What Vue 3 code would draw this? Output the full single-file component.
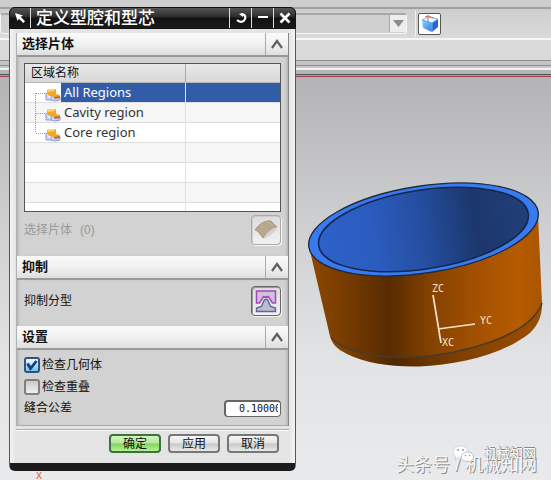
<script setup>
import { ref } from 'vue'

const regions = ref([
  { name: 'All Regions' },
  { name: 'Cavity region' },
  { name: 'Core region' },
])
const selected = ref('All Regions')
const blankRows = 5
const checkGeometry = ref(true)
const checkOverlap = ref(false)
const tolerance = ref('0.10000')
</script>

<template>
  <div class="app">
    <header class="toolbars">
      <div class="menu-strip"></div>
      <div class="tool-strip">
        <button class="filter" type="button" aria-label="Filter">
          <span class="filter-arrow">
            <svg width="11" height="7" viewBox="0 0 11 7"><path d="M0 0h11L5.5 7z" fill="#8c8c8c" /></svg>
          </span>
        </button>
        <span class="divider"></span>
        <button class="cube" type="button" aria-label="Solid view">
          <svg width="18" height="18" viewBox="0 0 18 18">
            <defs>
              <linearGradient id="cubeLeft" x1="0" y1="0" x2="1" y2="1">
                <stop offset="0" stop-color="#8ed4fb" /><stop offset="1" stop-color="#2f78ea" />
              </linearGradient>
            </defs>
            <path d="M1 5 7 2l10 2-6 4z" fill="#f2faff" stroke="#8fb8dc" />
            <path d="M1 5l10 3v9L2 13z" fill="url(#cubeLeft)" />
            <path d="M11 8l6-4v8l-6 5z" fill="#2a62d6" />
            <path d="M1 5l10 3 6-4M11 8v9" fill="none" stroke="#64aef2" />
            <path d="M7 0v7M4 2l3-1 6 2" fill="none" stroke="#d46a70" />
          </svg>
        </button>
      </div>
      <div class="prompt-strip"></div>
      <div class="edge-strip"></div>
      <div class="gap-strip"></div>
      <div class="frame-strip"></div>
    </header>

    <main class="viewport"></main>

    <svg class="model" width="250" height="200" viewBox="300 175 250 200">
      <defs>
        <linearGradient id="shell" gradientUnits="userSpaceOnUse" x1="310" y1="0" x2="542" y2="0">
          <stop offset="0" stop-color="#8c4700" />
          <stop offset=".14" stop-color="#7a3d00" />
          <stop offset=".34" stop-color="#572b00" />
          <stop offset=".52" stop-color="#844200" />
          <stop offset=".72" stop-color="#a35100" />
          <stop offset=".9" stop-color="#b65b00" />
          <stop offset="1" stop-color="#a95500" />
        </linearGradient>
        <linearGradient id="rimShade" gradientUnits="userSpaceOnUse" x1="330" y1="0" x2="542" y2="0">
          <stop offset="0" stop-color="#8d4800" />
          <stop offset=".3" stop-color="#502800" />
          <stop offset=".6" stop-color="#7d3f00" />
          <stop offset="1" stop-color="#9c4e00" />
        </linearGradient>
        <linearGradient id="cavity" gradientUnits="userSpaceOnUse" x1="318" y1="0" x2="529" y2="0">
          <stop offset="0" stop-color="#2d61c9" />
          <stop offset=".25" stop-color="#2b5cc0" />
          <stop offset=".5" stop-color="#254e9f" />
          <stop offset=".75" stop-color="#1b376c" />
          <stop offset="1" stop-color="#223f7a" />
        </linearGradient>
      </defs>
      <path d="M329 332C331 344 337 349 347 354C365 363 390 367 419 366.500C456 365 498 356 526 336C538 327 543 315 542 300L500 290Z" fill="url(#rimShade)" />
      <path d="M310 251L329 332C335 348 375 359 412 357C460 355 530 337 542 303L538 215Z" fill="url(#shell)" />
      <path d="M331 337C342 351 376 359 412 357C460 355 530 337 542 303" fill="none" stroke="#493b2a" stroke-width="1.500" />
      <ellipse cx="423.500" cy="229.500" rx="116" ry="43.500" transform="rotate(-8.700 423.500 229.500)" fill="#397af0" stroke="#1d2b3e" stroke-width="1.300" />
      <ellipse cx="423.500" cy="229.500" rx="106" ry="39.500" transform="rotate(-8.700 423.500 229.500)" fill="url(#cavity)" stroke="#14284c" stroke-width="1.500" />
      <path d="M433 295L441 343M438 329L475 324" fill="none" stroke="#f5e3d0" stroke-width="1.700" />
      <g class="axis-names">
        <text x="432" y="292">ZC</text>
        <text x="480" y="324">YC</text>
        <text x="442" y="346">XC</text>
      </g>
    </svg>

    <span class="origin">X</span>

    <p class="credit">头条号 / 机械知网</p>
    <div class="account">
      <svg width="22" height="18" viewBox="0 0 22 18">
        <path d="M8 1c4 0 7 2.500 7 5.500S12 12 8 12l-3 1-3 2 .7-3.500C1 10 0 8.500 0 6.500 0 3.500 4 1 8 1z" fill="#fff" stroke="#bbb" stroke-width=".6" />
        <path d="M14.500 7c3.500 0 6 2 6 4.700 0 1.500-.8 2.700-2 3.500l.5 2.300-2.500-1.300-2 .3c-3.500 0-6-2-6-4.800S11 7 14.500 7z" fill="#fff" stroke="#aaa" stroke-width=".7" />
        <g fill="#999"><circle cx="5" cy="5" r="1" /><circle cx="10" cy="5" r="1" /><circle cx="12.500" cy="10.500" r=".8" /><circle cx="16.500" cy="10.500" r=".8" /></g>
      </svg>
      <span>机械知网</span>
    </div>

    <section class="dialog" role="dialog" aria-labelledby="dialog-title">
      <div class="titlebar">
        <span class="pin">
          <svg width="12" height="12" viewBox="0 0 12 12"><path d="M1 1l8 2.500-2.300 1.300L11 9.300 9.300 11 4.800 6.700 3.500 9z" fill="#fff" /></svg>
        </span>
        <h1 id="dialog-title">定义型腔和型芯</h1>
        <button type="button" aria-label="Reset">
          <svg width="12" height="12" viewBox="0 0 12 12"><path d="M6 2.500C9 1.500 11 4 10 7S5 11 2 8" fill="none" stroke="#fff" stroke-width="2.200" /><path d="M4 2l4-1v4z" fill="#fff" /></svg>
        </button>
        <button type="button" aria-label="Minimize">
          <svg width="12" height="12" viewBox="0 0 12 12"><path d="M1 5h10" stroke="#fff" stroke-width="2" /></svg>
        </button>
        <button type="button" aria-label="Close">
          <svg width="12" height="12" viewBox="0 0 12 12"><path d="M1.500 1.500l9 9M10.500 1.500l-9 9" stroke="#fff" stroke-width="2.600" /></svg>
        </button>
      </div>

      <div class="panel">
        <div class="group-head">
          <h2>选择片体</h2>
          <button type="button" aria-label="Collapse">
            <svg width="12" height="10" viewBox="0 0 12 10"><path d="M1 9l5-7 5 7" fill="none" stroke="#606060" stroke-width="2.200" /></svg>
          </button>
        </div>
        <div class="group pick">
          <div class="list">
            <table>
              <colgroup><col class="name-col" /><col /></colgroup>
              <thead>
                <tr><th>区域名称</th><th></th></tr>
              </thead>
              <tbody>
                <tr v-for="(r, i) in regions" :key="r.name" :class="{ selected: selected === r.name }" @click="selected = r.name">
                  <td>
                    <div class="node">
                      <svg width="39" height="20" viewBox="0 0 39 20">
                        <path :d="i === 0 ? 'M10.500 10v10' : i === 1 ? 'M10.500 0v20' : 'M10.500 0v10'" stroke="#999" stroke-dasharray="1 1" />
                        <path d="M11 10.500h9" stroke="#999" stroke-dasharray="1 1" />
                        <path d="M21 10v7h5M26 12v5l4 1 5-1v-3l-4-2" fill="#cbd6fb" stroke="#8795e0" />
                        <path d="M22 7l2-1h7v5l4 1v3l-6 0-2-2h-3l-2-2z" fill="#f5a623" />
                        <path d="M22 7l2-1h7l-2 2-6 1z" fill="#ffd36a" />
                        <path d="M29 14l6-1v2l-5 1z" fill="#bd693b" />
                      </svg>
                      <span>{{ r.name }}</span>
                    </div>
                  </td>
                  <td></td>
                </tr>
                <tr v-for="n in blankRows" :key="n"><td></td><td></td></tr>
              </tbody>
            </table>
          </div>
          <div class="line">
            <span class="muted">选择片体<span class="count">(0)</span></span>
            <button class="tile disabled" type="button" disabled aria-label="选择片体">
              <svg width="24" height="22" viewBox="0 0 24 22">
                <path d="M4 15l6 5 8-5 5-5-4-3z" fill="#c7c7c7" opacity=".7" />
                <path d="M1 11C5 5 11 1 17 2l6 6c-5 0-10 4-14 11-2-4-5-7-8-8z" fill="#b7a88d" stroke="#a89a82" />
                <path d="M6 7c4 1 7 4 8 7M13 3c3 1 5 4 6 6" stroke="#c2b699" fill="none" />
              </svg>
            </button>
          </div>
        </div>

        <div class="group-head">
          <h2>抑制</h2>
          <button type="button" aria-label="Collapse">
            <svg width="12" height="10" viewBox="0 0 12 10"><path d="M1 9l5-7 5 7" fill="none" stroke="#606060" stroke-width="2.200" /></svg>
          </button>
        </div>
        <div class="group suppress">
          <div class="line">
            <span>抑制分型</span>
            <button class="tile" type="button" aria-label="抑制分型">
              <svg width="22" height="24" viewBox="0 0 22 24">
                <path d="M1.500 2h19v12h-3l-4-6.500-1.500 1-1-1-1 1-1.500-1L4.500 14h-3z" fill="#cfc3dc" stroke="#a847bd" stroke-width="1.500" />
                <path d="M1.500 22.500h19V19l-5-1.500-2.500-6c-1-1.500-3-1.500-4 0l-2.500 6-5 1.500z" fill="#b9bdd0" stroke="#62639c" stroke-width="1.400" />
              </svg>
            </button>
          </div>
        </div>

        <div class="group-head">
          <h2>设置</h2>
          <button type="button" aria-label="Collapse">
            <svg width="12" height="10" viewBox="0 0 12 10"><path d="M1 9l5-7 5 7" fill="none" stroke="#606060" stroke-width="2.200" /></svg>
          </button>
        </div>
        <div class="group settings">
          <label class="check">
            <input v-model="checkGeometry" type="checkbox" />
            <svg v-if="checkGeometry" width="12" height="12" viewBox="0 0 12 12"><path d="M1.500 4.500l3 5 6-7.500" fill="none" stroke="#133f7c" stroke-width="2.800" /></svg>
            <span>检查几何体</span>
          </label>
          <label class="check">
            <input v-model="checkOverlap" type="checkbox" />
            <svg v-if="checkOverlap" width="12" height="12" viewBox="0 0 12 12"><path d="M1.500 4.500l3 5 6-7.500" fill="none" stroke="#133f7c" stroke-width="2.800" /></svg>
            <span>检查重叠</span>
          </label>
          <div class="line">
            <label for="tolerance">缝合公差</label>
            <input id="tolerance" v-model="tolerance" class="field" type="text" />
          </div>
        </div>
      </div>

      <div class="actions">
        <button class="primary" type="button">确定</button>
        <button type="button">应用</button>
        <button type="button">取消</button>
      </div>
    </section>
  </div>
</template>

<style>
body {
  background: #e8e9ea;
}
</style>

<style scoped>
* {
  box-sizing: border-box;
}
.app {
  position: relative;
  display: flex;
  flex-direction: column;
  min-height: 100vh;
  overflow: hidden;
  color: #111;
  font: 12px/16px "Liberation Sans", "Noto Sans CJK SC", sans-serif;
}
button {
  padding: 0;
  border: 0;
  background: none;
  font: inherit;
  color: inherit;
}
svg {
  display: block;
  flex: none;
}
.menu-strip {
  height: 9px;
  background: #cdcdcd;
  border-bottom: 2px solid #a0a0a0;
}
.tool-strip {
  display: flex;
  align-items: center;
  gap: 8px;
  height: 31px;
  background: linear-gradient(#cecece, #dadada);
  border-bottom: 2px solid #f6f6f6;
}
.filter {
  display: flex;
  justify-content: flex-end;
  width: 407px;
  height: 21px;
  background: #d0d0d0;
  border: 1px solid #f4f4f4;
  border-top: 2px solid #a8a8a8;
  border-radius: 3px;
}
.filter-arrow {
  display: flex;
  align-items: center;
  justify-content: center;
  width: 17px;
  height: 17px;
  background: #ededed;
  border-left: 1px solid #aaa;
}
.divider {
  width: 1px;
  height: 27px;
  margin-right: -6px;
  background: #f0f0f0;
}
.cube {
  display: flex;
  align-items: center;
  justify-content: center;
  width: 23px;
  height: 22px;
  background: #fff;
  border: 1px solid #555;
  border-radius: 2px;
}
.prompt-strip {
  height: 21px;
  background: #dadada;
  border-bottom: 1px solid #929292;
}
.edge-strip {
  height: 5px;
  background: #c4c4c4;
  border-bottom: 1px solid #8f8f8f;
}
.gap-strip {
  height: 4px;
  background: #c6c6c6;
  border-bottom: 2px solid #f2f2f2;
}
.frame-strip {
  height: 8px;
  background: linear-gradient(#b4b4b6 0 4px, #4e5356 4px 5px, #a5a5a7 5px 6px, #a33e4c 6px 7px, #b4b4b6 7px);
}
.viewport {
  flex: 1;
  background: linear-gradient(#b4b4b6, #cfd0d1 38%, #e2e3e4 70%, #e9eaeb);
}
.model {
  position: absolute;
  left: 300px;
  top: 175px;
}
.axis-names {
  fill: #f5e3d0;
  font: 10px "DejaVu Sans Mono", monospace;
}
.origin {
  position: absolute;
  left: 36px;
  top: 471px;
  color: #d85560;
  font: 10px/12px "Liberation Mono", monospace;
}
.credit {
  position: absolute;
  left: 396px;
  top: 452px;
  margin: 0;
  color: #f4f4f4;
  font-size: 18px;
  line-height: 26px;
  white-space: nowrap;
  text-shadow: 1px 1px 0 #8c8c8c;
}
.account {
  position: absolute;
  left: 453px;
  top: 445px;
  display: flex;
  align-items: center;
  gap: 9px;
  color: #fff;
  font-size: 13px;
  line-height: 18px;
  white-space: nowrap;
  text-shadow: 1px 0 0 #888, 0 -1px 0 #888;
}
.dialog {
  position: absolute;
  left: 9px;
  top: 7px;
  width: 287px;
  background: linear-gradient(90deg, #f4f4f4, #e4e4e4 6px calc(100% - 6px), #f4f4f4);
  border: 1px solid #555;
  border-bottom: 8px solid #1c1c1c;
  border-radius: 6px;
}
.titlebar {
  display: flex;
  align-items: stretch;
  height: 22px;
  margin: -1px -1px 0;
  background: linear-gradient(#555, #2b2b2b 45%, #111 50%, #1b1b1b);
  border: 1px solid #111;
  border-radius: 6px 6px 0 0;
}
.pin,
.titlebar button {
  display: flex;
  align-items: center;
  justify-content: center;
  width: 22px;
}
.pin {
  width: 20px;
}
.titlebar button {
  border-left: 1px solid #ddd;
}
.titlebar h1 {
  flex: 1;
  margin: 0;
  padding-left: 5px;
  border-left: 1px solid #ddd;
  color: #fff;
  font-size: 17px;
  font-weight: 500;
  line-height: 22px;
  white-space: nowrap;
}
.panel {
  margin: 4px 6px 0;
  border-right: 1px solid #888;
  border-left: 1px solid #b0b0b0;
}
.group-head {
  display: flex;
  height: 24px;
  background: linear-gradient(#fafafa, #f0f1f1 50%, #dedede);
  border-bottom: 2px solid #999;
}
.group-head h2 {
  flex: 1;
  margin: 0;
  padding-left: 5px;
  font-size: 13px;
  font-weight: 700;
  line-height: 22px;
}
.group-head button {
  display: flex;
  align-items: center;
  justify-content: center;
  width: 23px;
  border-left: 1px solid #aaa;
}
.group {
  padding: 0 7px;
  background: #d2d2d2;
  box-shadow: inset 3px 0 3px -2px #aaa, inset -3px 0 3px -2px #aaa;
}
.pick {
  height: 199px;
  padding-top: 6px;
}
.list {
  height: 149px;
  overflow: hidden;
  background: #fff;
  border: 1px solid #555;
}
.list table {
  width: 100%;
  border-collapse: separate;
  border-spacing: 0;
  table-layout: fixed;
}
.name-col {
  width: 161px;
}
.list th {
  height: 19px;
  padding: 0 6px;
  background: linear-gradient(#e9e9e9, #d8d8d8);
  border-right: 1px solid #aaa;
  border-bottom: 1px solid #b5b5b5;
  font-weight: 400;
  line-height: 18px;
  text-align: left;
}
.list td {
  height: 20px;
  padding: 0;
  border-right: 1px solid #e2e2e2;
  border-bottom: 1px solid #dedede;
}
.list th:last-child,
.list td:last-child {
  border-right: 0;
}
.list tbody tr:nth-child(even) td {
  background: #f6f6f6;
}
.node {
  display: flex;
  height: 19px;
  color: #333;
  font: 13px/18px "Noto Sans", sans-serif;
}
.node span {
  margin-left: -3px;
  padding-left: 3px;
}
.selected .node span {
  flex: 1;
  background: #315da8;
  color: #fff;
}
.selected td:last-child {
  background: #315da8;
}
.line {
  display: flex;
  align-items: center;
  justify-content: space-between;
}
.pick .line {
  height: 36px;
}
.muted {
  color: #999;
}
.count {
  margin-left: 8px;
}
.tile {
  display: flex;
  align-items: center;
  justify-content: center;
  width: 30px;
  height: 30px;
  background: linear-gradient(#dcdcdc, #f1f1f4);
  border: 1px solid #666;
  border-radius: 4px;
  box-shadow: 1px 1px 0 #f4f4f4, inset 1px 1px 0 #999;
}
.tile.disabled {
  border-color: #aaa;
  box-shadow: 1px 1px 0 #f4f4f4, inset 1px 1px 0 #ccc;
}
.suppress {
  height: 46px;
}
.suppress .line {
  height: 42px;
}
.settings {
  height: 76px;
  padding-top: 4px;
  border-bottom: 1px solid #aaa;
}
.check {
  position: relative;
  display: flex;
  align-items: center;
  gap: 2px;
  height: 22px;
}
.check input {
  appearance: none;
  width: 16px;
  height: 16px;
  margin: 0;
  background: linear-gradient(#c8c8c8, #f0f0f0);
  border: 2px solid #808080;
  border-radius: 3px;
}
.check input:checked {
  background: linear-gradient(#f4fbff, #6cc5ee);
  border-color: #35527a;
}
.check svg {
  position: absolute;
  left: 2px;
  top: 5px;
}
.settings .line {
  height: 20px;
}
.field {
  width: 57px;
  height: 17px;
  padding: 0 2px 0 13px;
  background: #fff;
  border: 2px solid #666;
  border-right-width: 1px;
  border-bottom-width: 1px;
  border-radius: 4px;
  color: #111;
  font: 10px/14px "DejaVu Sans Mono", monospace;
}
.actions {
  display: flex;
  justify-content: flex-end;
  gap: 7px;
  margin: 3px 6px 0;
  padding: 4px 10px 10px;
  border-top: 1px solid #aaa;
  box-shadow: inset 0 1px #fff;
}
.actions button {
  width: 52px;
  height: 19px;
  background: linear-gradient(#f7f7f7, #e2e2e2 48%, #c8c8c8 52%, #e8e8e8);
  border: 2px solid #777;
  border-radius: 4px;
  line-height: 14px;
}
.actions .primary {
  background: linear-gradient(#d4f5c0, #b4e79c 48%, #7fd45f 52%, #b6f193);
  border-color: #3e7040;
}
</style>
